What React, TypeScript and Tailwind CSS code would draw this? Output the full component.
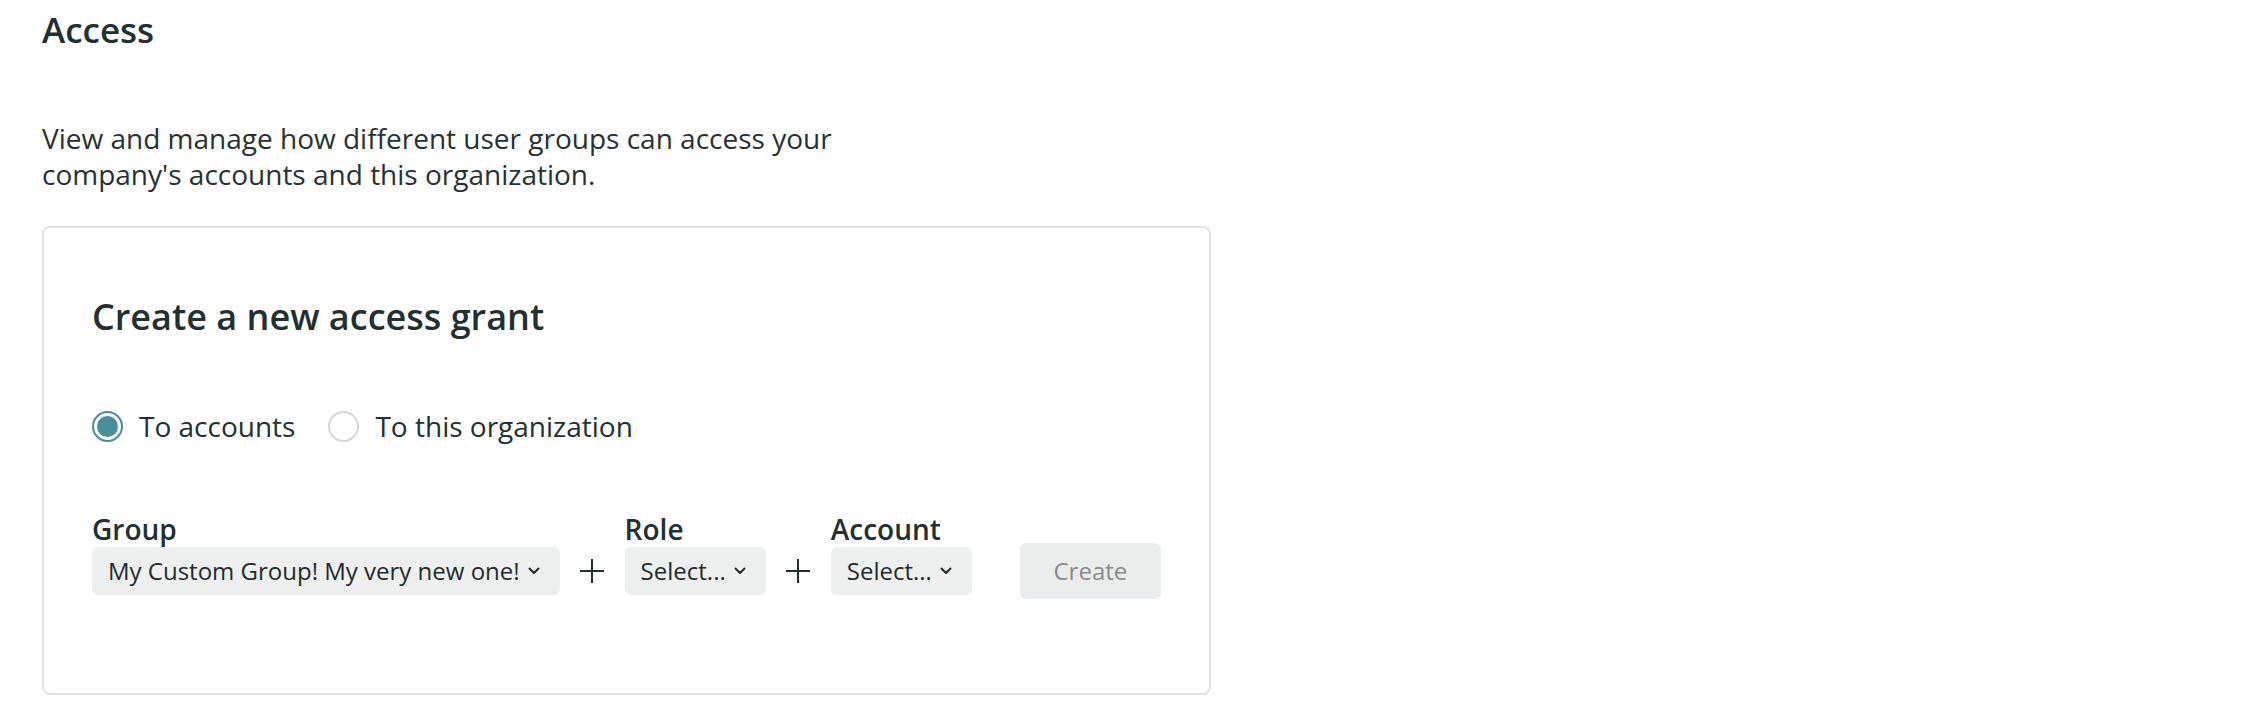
import React from "react";

function Chevron() {
  return (
    <svg width="12" height="8" viewBox="0 0 12 8" fill="none" className="ml-2 shrink-0">
      <path d="M1.5 1.5l4.5 4.5 4.5-4.5" stroke="#1f2b2b" strokeWidth="2" strokeLinecap="round" strokeLinejoin="round" />
    </svg>
  );
}

function Plus() {
  return (
    <div className="h-[48px] w-[65px] flex items-center justify-center shrink-0">
      <svg width="26" height="26" viewBox="0 0 26 26" fill="none">
        <path d="M13 1v24M1 13h24" stroke="#243030" strokeWidth="2" />
      </svg>
    </div>
  );
}

function Field({ label, value }: { label: string; value: string }) {
  return (
    <div className="flex flex-col">
      <label className="text-[28px] leading-[36px] font-semibold text-[#213030]">{label}</label>
      <button className="h-[48px] flex items-center pl-4 pr-5 rounded-[6px] bg-[#eef0ef] text-[24px] text-[#1f2b2b] whitespace-nowrap">
        <span>{value}</span>
        <Chevron />
      </button>
    </div>
  );
}

function Radio({ checked, label }: { checked: boolean; label: string }) {
  return (
    <label className="flex items-center gap-4 cursor-pointer">
      <span
        className={`w-[31px] h-[31px] rounded-full border-2 flex items-center justify-center ${
          checked ? "border-[#4b8e9b]" : "border-[#d6d6d6]"
        }`}
      >
        {checked && <span className="w-[21px] h-[21px] rounded-full bg-[#4b8e9b]" />}
      </span>
      <span className="text-[28px] leading-[36px] text-[#213030]">{label}</span>
    </label>
  );
}

export default function App() {
  return (
    <div className="min-h-screen bg-white px-[42px] pt-[7px]" style={{ fontFamily: '"Open Sans", "Noto Sans", sans-serif' }}>
      <h1 className="text-[35px] leading-[46px] font-semibold text-[#213030]">Access</h1>
      <p className="mt-[67px] max-w-[860px] text-[28px] leading-[36px] text-[#263232]">
        View and manage how different user groups can access your company's accounts and this organization.
      </p>

      <div className="mt-[34px] w-[1169px] border-2 border-[#e2e2e2] rounded-[8px] pt-[64px] px-[48px] pb-[98px]">
        <h2 className="text-[36px] leading-[49px] font-semibold text-[#213030]">Create a new access grant</h2>

        <div className="mt-[67px] flex items-center gap-[33px]">
          <Radio checked label="To accounts" />
          <Radio checked={false} label="To this organization" />
        </div>

        <div className="mt-[67px] flex items-end">
          <Field label="Group" value="My Custom Group! My very new one!" />
          <Plus />
          <Field label="Role" value="Select..." />
          <Plus />
          <Field label="Account" value="Select..." />
          <div className="h-[48px] ml-[48px] flex items-center">
            <button className="h-[56px] w-[141px] rounded-[6px] bg-[#ebeded] text-[24px] text-[#8a8a8a]">Create</button>
          </div>
        </div>
      </div>
    </div>
  );
}
